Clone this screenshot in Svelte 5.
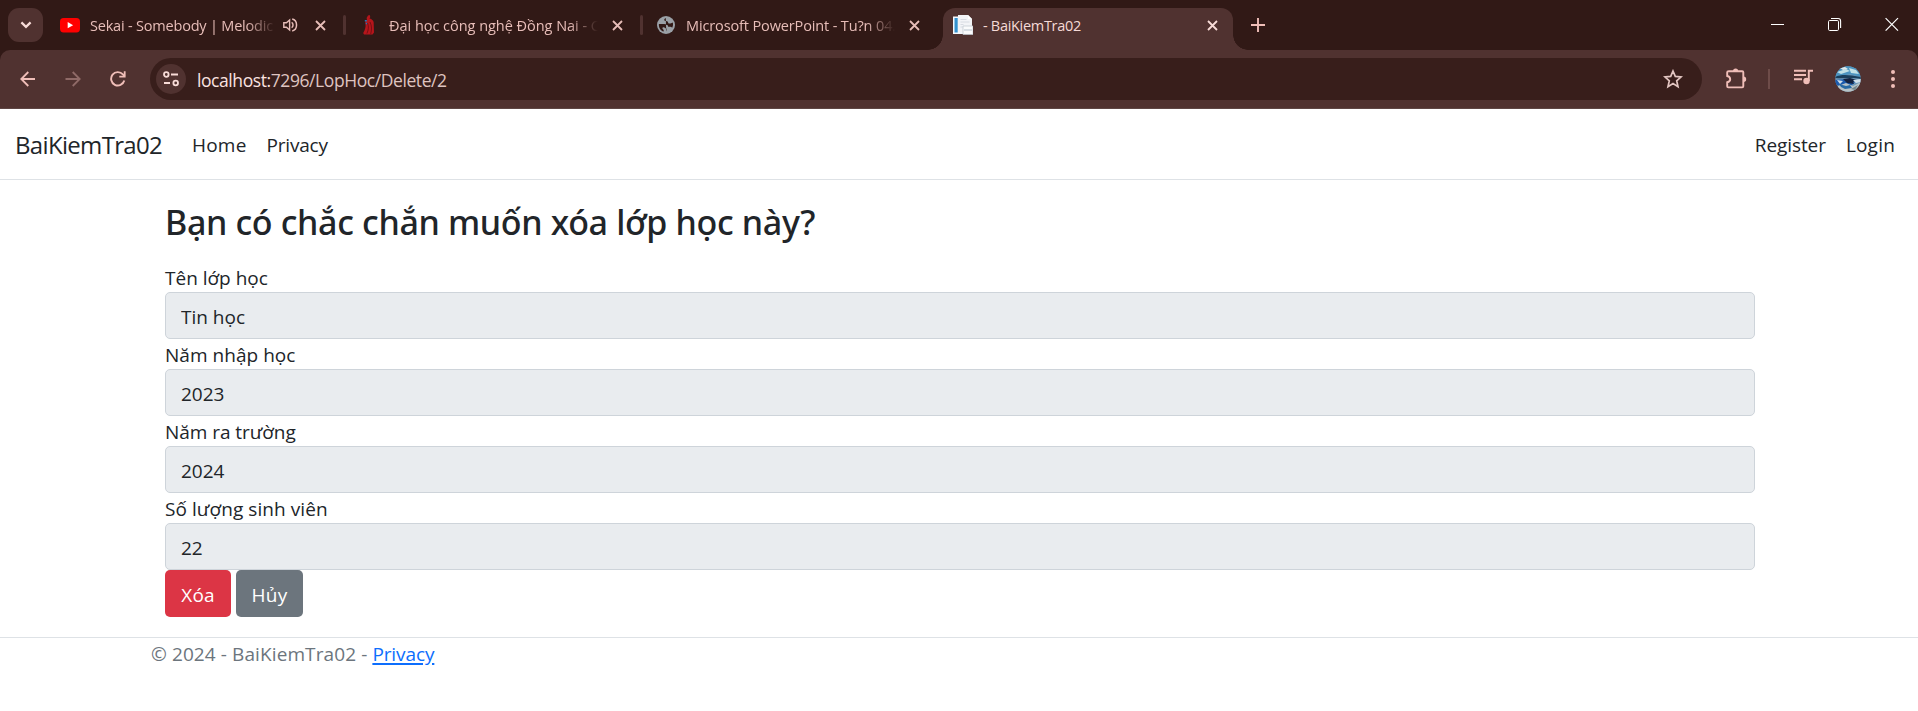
<script>
  const fields = [
    { id: 'ten', label: 'Tên lớp học', value: 'Tin học', ls: 0 },
    { id: 'nam-nhap', label: 'Năm nhập học', value: '2023', ls: 0.04 },
    { id: 'nam-ra', label: 'Năm ra trường', value: '2024', ls: -0.05 },
    { id: 'so-luong', label: 'Số lượng sinh viên', value: '22', ls: 0.07 }
  ];
</script>

{#snippet close()}
  <svg class="close" width="11" height="11" viewBox="0 0 11 11"><path d="M1 1l9 9M10 1L1 10" stroke="currentColor" stroke-width="1.8" fill="none" /></svg>
{/snippet}

<div class="browser">
  <div class="strip">
    <div class="search-tabs">
      <svg width="12" height="8" viewBox="0 0 12 8"><path d="M1.4 1.4L6 5.9l4.6-4.5" fill="none" stroke="#f8dcd8" stroke-width="2.2" /></svg>
    </div>

    <div class="tab">
      <svg class="fav" width="20" height="20" viewBox="0 0 20 20"><rect y="3" width="20" height="14.4" rx="3.6" fill="#f00" /><path d="M7.7 7.1v6.2l5.4-3.1z" fill="#fff" /></svg>
      <span class="title youtube">Sekai - Somebody | Melodic</span>
      <svg class="speaker" width="15" height="14" viewBox="0 0 15 14"><path d="M.8 4.800h2.600L6.600 2v10L3.400 9.200H.8z" fill="none" stroke="currentColor" stroke-width="1.400" /><path d="M8.600 4.300c1.900 1 1.900 4.400 0 5.400M9.200 1.100c5.800 1.300 5.800 10.500 0 11.800" fill="none" stroke="currentColor" stroke-width="1.500" /></svg>
      {@render close()}
    </div>

    <div class="tab divided">
      <svg class="fav dnu-icon" width="12" height="20" viewBox="0 0 12 20">
        <path d="M5 .4l1.700-.4.6 1.900-.8 1.700c3 .6 4.700 3.200 4.200 5.200L11 17.500l-1.500 2H1l-.8-1.500c1.900-3.300 2.600-6 2.300-8.500-.7-2.300-.2-3.700 1.500-4.700L3.600 3z" fill="#b5151b" />
        <path d="M4.500 8c1.500 3.500 1 7-.6 10.500M7 7c2 4 1.700 8 .7 12" fill="none" stroke="#6d0d12" stroke-width=".9" />
        <path d="M1.800 5.800h2M2.800 8.500h1.300" stroke="#2676b8" stroke-width="1.600" />
      </svg>
      <span class="title dnu">Đại học công nghệ Đồng Nai - C</span>
      {@render close()}
    </div>

    <div class="tab divided">
      <svg class="fav globe" width="20" height="20" viewBox="0 0 20 20"><circle cx="10" cy="10" r="9" fill="#9aa0a6" /><path d="M9.800 3.100c-1.900 1-2.200 2.600-.4 3 .8.200 2.500.1 2.700 1.300.2 1.300 1.500 1.300 3 .9l1.700-.8c.5 1.900.2 3.800-.6 5.200-.9-1-2.400-1-3.700-.8-.7-2-2.200-2.800-4.400-2.800l-5.200-.2c-.4 3.600 1.600 6.800 4.800 7.600.2-1.200-.2-1.800-.9-2.400-.7-.7-.5-1.700.5-1.900 1.700-.3 1.400 1.200 2.600 1.100 1.200-.1.800 1.700.3 3.300" fill="#311916" /></svg>
      <span class="title ppt">Microsoft PowerPoint - Tu?n 04.</span>
      {@render close()}
    </div>

    <div class="tab active">
      <svg class="fav" width="20" height="20" viewBox="0 0 20 20">
        <path d="M0 1.500h15v17.500H0z" fill="#f4f8fc" /><path d="M1.500 3h3.200v14.500H1.500z" fill="#3492cf" /><path d="M5 0h10l4 4v13H5z" fill="#f3f4f7" /><path d="M15 0l4 4h-4z" fill="#fff" />
        <path d="M7.500 4.500h6M7.500 7h9M7.500 9.500h3M7.500 12h2" stroke="#d5d8df" stroke-width=".9" /><path d="M10 11h10v8.500H10z" fill="#fafbfc" stroke="#bcc4cc" stroke-width=".7" /><path d="M11 15h8" stroke="#cdd5dd" stroke-width="1.500" />
      </svg>
      <span class="title app">- BaiKiemTra02</span>
      {@render close()}
    </div>

    <svg class="new-tab" width="14" height="14" viewBox="0 0 14 14"><path d="M7 0v14M0 7h14" stroke="#f0beb8" stroke-width="1.900" /></svg>

    <div class="window-controls">
      <svg width="14" height="14" viewBox="0 0 14 14"><path d="M0 7.500h13" stroke="#fff" /></svg>
      <svg width="14" height="14" viewBox="0 0 14 14"><rect x=".5" y="3.500" width="10" height="10" rx="1.200" fill="none" stroke="#fff" /><path d="M3 1.500h7.200q2.400 0 2.400 2.400v7" fill="none" stroke="#fff" stroke-width="1.100" /></svg>
      <svg width="14" height="14" viewBox="0 0 14 14"><path d="M.6 1.200l12.400 12.400M13 1.200L.6 13.600" stroke="#fff" stroke-width="1.200" /></svg>
    </div>
  </div>

  <div class="toolbar">
    <div class="nav-icons">
      <svg width="16" height="16" viewBox="0 0 16 16"><path d="M15 8H1.500M8.300 1L1.300 8l7 7" fill="none" stroke="#f0beb8" stroke-width="1.800" /></svg>
      <svg width="16" height="16" viewBox="0 0 16 16"><path d="M.5 8h14M7.700 1l7 7-7 7" fill="none" stroke="#8f6a67" stroke-width="1.800" /></svg>
      <svg width="16" height="16" viewBox="0 0 16 16"><path d="M14.300 9.600A6.700 6.700 0 1 1 12.900 3.400L14.600 5.400" fill="none" stroke="#f0beb8" stroke-width="1.900" /><path d="M14.700.3v5.400H9.300" fill="none" stroke="#f0beb8" stroke-width="1.800" /></svg>
    </div>
    <div class="omnibox">
      <div class="site-info">
        <svg width="16" height="16" viewBox="0 0 16 16" fill="none" stroke="#f8dcd8" stroke-width="1.800"><circle cx="3.300" cy="3.500" r="2.300" /><path d="M8 3.500h7M1 12h6" /><circle cx="12.700" cy="12" r="2.300" /></svg>
      </div>
      <span class="url"><b>localhost:</b>7296/LopHoc/Delete/2</span>
      <svg class="star" width="20" height="20" viewBox="0 0 20 20"><path d="M10 2l2.300 5.400 5.800.5-4.400 3.900 1.300 5.800-5-3.100-5 3.100 1.300-5.800L1.900 7.900l5.800-.5z" fill="none" stroke="#e3c6c2" stroke-width="1.700" /></svg>
    </div>
    <svg class="puzzle" width="22" height="22" viewBox="0 0 22 22"><path d="M3.800 3.200h13.400q1.100 0 1.100 1.100v14q0 1.100-1.100 1.100H3.300q-1.100 0-1.100-1.100v-4.100c4-.9 4-5.200 0-6.200V4.300q0-1.100 1.600-1.100z" fill="none" stroke="#f0beb8" stroke-width="1.900" /><path d="M8 3.200a2.600 2.600 0 0 1 5.200 0zM18.500 8.500a2.700 2.700 0 0 1 0 5.400z" fill="#f0beb8" /></svg>
    <div class="divider"></div>
    <svg class="music" width="20" height="16" viewBox="0 0 20 16"><path d="M0 1.800h12M0 6h12M0 10.200h8" stroke="#f0beb8" stroke-width="1.900" /><circle cx="12.500" cy="12" r="3.200" fill="#f0beb8" /><path d="M14.800 12V1.700H19" fill="none" stroke="#f0beb8" stroke-width="1.900" /></svg>
    <svg class="avatar" width="26" height="26" viewBox="0 0 26 26">
      <defs><clipPath id="avatar-clip"><circle cx="13" cy="13" r="12.700" /></clipPath></defs>
      <g clip-path="url(#avatar-clip)"><path d="M0 0h26v26H0z" fill="#6d98b8" /><path d="M0 4l7-4h13l6 6v5L15 8 0 12z" fill="#4b94c0" /><path d="M2 6l9-3 4 2-9 3zM14 2l7 2 3 4-8-1z" fill="#c3e2e6" /><path d="M5 2l5-1 3 2-5 1z" fill="#e0e9ea" /><path d="M0 11c7-3 14-2 26 0v2c-9-2-17 0-26-1z" fill="#1a3f5c" /><path d="M0 14l12-1 8 3-5 5-15-2z" fill="#1c5cae" /><path d="M8 13l7-1 7 2-4 2 1 2-7-1z" fill="#14233f" /><path d="M2 14l6 1-3 3zM18 14l8-1v3l-5 1z" fill="#d1e0ea" /><path d="M3 20l8-3 7 3 8-4v10H3z" fill="#b7c3c6" /><path d="M4 18l7 2 4-1 2 3-7 1-4-2z" fill="#276aa4" /><path d="M16 23l7-4-3 5z" fill="#74868b" /></g>
    </svg>
    <svg class="kebab" width="4" height="18" viewBox="0 0 4 18" fill="#f0beb8"><circle cx="2" cy="2" r="2" /><circle cx="2" cy="9" r="2" /><circle cx="2" cy="16" r="2" /></svg>
  </div>
</div>

<header>
  <a class="brand" href="#top">BaiKiemTra02</a>
  <nav class="links"><a class="home" href="#home">Home</a><a class="privacy" href="#privacy">Privacy</a></nav>
  <nav class="account"><a class="register" href="#register">Register</a><a class="login" href="#login">Login</a></nav>
</header>

<main>
  <h1>Bạn có chắc chắn muốn xóa lớp học này?</h1>
  <form>
    {#each fields as field}
      <label for={field.id} style="letter-spacing: {field.ls}px">{field.label}</label>
      <input id={field.id} value={field.value} readonly />
    {/each}
    <div class="actions">
      <button class="danger" type="button">Xóa</button>
      <button class="secondary" type="button">Hủy</button>
    </div>
  </form>
</main>

<footer><div class="footer-inner"><span>© 2024 - BaiKiemTra02 -</span><a href="#privacy">Privacy</a></div></footer>

<style>
  :global(body) { background: #fff; overflow: hidden; font-family: 'Open Sans', 'Noto Sans', sans-serif; }
  svg { display: block; flex: none; }

  .browser { height: 109px; box-sizing: border-box; background: #311916; border-bottom: 1px solid #5e4644; }
  .strip { height: 50px; display: flex; align-items: stretch; color: #e7bdb8; }
  .search-tabs { width: 35px; height: 34px; margin: 8px 5px 0 8px; border-radius: 11px; background: #503230; display: flex; align-items: center; justify-content: center; flex: none; }

  .tab { width: 297px; box-sizing: border-box; padding: 0 19px 0 12px; display: flex; align-items: center; position: relative; flex: none; }
  .tab.divided::before { content: ''; position: absolute; left: -2px; top: 15px; width: 3px; height: 20px; border-radius: 2px; background: #503230; }
  .title { flex: 1; margin-left: 10px; font-size: 14.5px; line-height: 22px; height: 22px; padding-top: 1px; white-space: nowrap; overflow: hidden; }
  .youtube { letter-spacing: -.2px; margin-right: 7px; -webkit-mask-image: linear-gradient(90deg, #000 84%, transparent 100%); mask-image: linear-gradient(90deg, #000 84%, transparent 100%); }
  .dnu-icon { margin-left: 6px; }
  .dnu { letter-spacing: -.03px; margin-left: 14px; }
  .globe { margin-left: 2px; }
  .dnu, .ppt { margin-right: 14px; -webkit-mask-image: linear-gradient(90deg, #000 86%, transparent 100%); mask-image: linear-gradient(90deg, #000 86%, transparent 100%); }
  .ppt { letter-spacing: -.13px; margin-left: 10px; }
  .app { letter-spacing: -.3px; color: #f5dad6; }
  .speaker { margin-right: 17px; }
  .active { width: 290px; margin-left: 4px; top: 8px; height: 42px; padding: 0 15px 8px 10px; background: #503230; border-radius: 12px 12px 0 0; color: #f8dcd8; }
  .active::before, .active::after { content: ''; position: absolute; bottom: 0; width: 15px; height: 15px; }
  .active::before { left: -15px; background: radial-gradient(circle at 0 0, transparent 14.500px, #503230 15px); }
  .active::after { right: -15px; background: radial-gradient(circle at 100% 0, transparent 14.500px, #503230 15px); }
  .new-tab { margin: 18px 0 0 18px; }
  .window-controls { margin: 17px 19px 0 auto; display: flex; gap: 43px; }

  .toolbar { height: 58px; display: flex; align-items: center; background: #503230; border-radius: 10px 10px 0 0; }
  .nav-icons { display: flex; gap: 29px; margin-left: 20px; width: 130px; flex: none; }
  .omnibox { width: 1552px; height: 42px; border-radius: 21px; background: #381e1b; display: flex; align-items: center; flex: none; }
  .site-info { width: 30px; height: 30px; margin-left: 6px; border-radius: 50%; background: #503230; display: flex; align-items: center; justify-content: center; }
  .url { margin-left: 11px; padding-top: 1px; font-size: 17.500px; line-height: 26px; letter-spacing: -.42px; color: #dfc4c0; white-space: nowrap; }
  .url b { font-weight: 400; color: #fbe3e0; }
  .star { margin: 0 19px 0 auto; }
  .puzzle { margin-left: 23px; }
  .divider { width: 2px; height: 20px; margin-left: 21px; background: #6e4c49; }
  .music { margin-left: 24px; margin-bottom: 4px; }
  .avatar { margin-left: 21px; }
  .kebab { margin-left: 30px; }

  header { height: 71px; box-sizing: border-box; border-bottom: 1px solid #dee2e6; display: flex; align-items: center; padding: 2px 23px 0 15px; }
  header a { text-decoration: none; color: #212529; font-size: 19px; line-height: 30px; }
  header .brand { width: 177px; font-size: 24px; letter-spacing: -.67px; }
  .links { display: flex; gap: 20px; }
  .account { display: flex; gap: 20px; margin-left: auto; }
  .home { letter-spacing: .2px; }
  .privacy { letter-spacing: -.2px; }
  .register { letter-spacing: -.08px; }
  .login { letter-spacing: .2px; }

  main { width: 1590px; margin-left: 165px; padding-top: 21px; color: #212529; }
  h1 { margin: 0; height: 61px; font: 500 34px/42px 'Noto Sans', 'Open Sans', sans-serif; letter-spacing: -.34px; white-space: nowrap; }
  form { display: flex; flex-direction: column; }
  label { height: 30px; font-size: 19px; line-height: 32px; }
  input { height: 47px; box-sizing: border-box; width: 100%; border: 1px solid #ced4da; border-radius: 5px; background: #e9ecef; color: #212529; padding: 3px 15px 0; font: 19px/30px 'Open Sans', sans-serif; }
  .actions { display: flex; gap: 5px; }
  button { height: 47px; width: 66px; padding: 3px 0 0; border: 0; border-radius: 5px; color: #fff; font: 19px/30px 'Open Sans', sans-serif; letter-spacing: .2px; }
  .danger { background: #dc3545; }
  .secondary { width: 67px; background: #6c757d; }

  footer { margin-top: 20px; border-top: 1px solid #dee2e6; color: #6c757d; }
  .footer-inner { margin-left: 151px; display: flex; gap: 5px; font-size: 19px; line-height: 32px; letter-spacing: .1px; }
  .footer-inner a { color: #0d6efd; letter-spacing: -.1px; text-decoration-thickness: 2px; text-underline-offset: 2px; }
</style>
